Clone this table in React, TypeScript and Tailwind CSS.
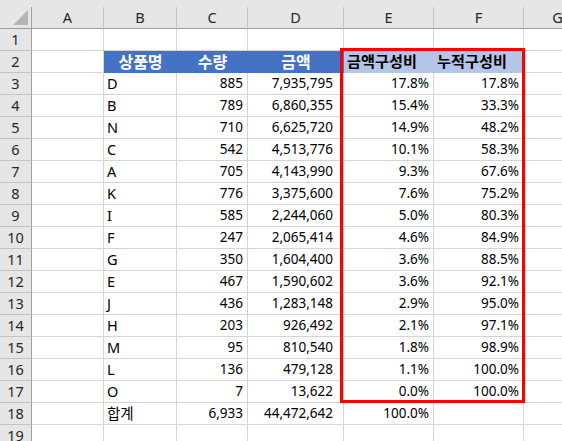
import React from "react";

type Row = [string, string, string, string, string];

const data: Row[] = [
  ["D", "885", "7,935,795", "17.8%", "17.8%"],
  ["B", "789", "6,860,355", "15.4%", "33.3%"],
  ["N", "710", "6,625,720", "14.9%", "48.2%"],
  ["C", "542", "4,513,776", "10.1%", "58.3%"],
  ["A", "705", "4,143,990", "9.3%", "67.6%"],
  ["K", "776", "3,375,600", "7.6%", "75.2%"],
  ["I", "585", "2,244,060", "5.0%", "80.3%"],
  ["F", "247", "2,065,414", "4.6%", "84.9%"],
  ["G", "350", "1,604,400", "3.6%", "88.5%"],
  ["E", "467", "1,590,602", "3.6%", "92.1%"],
  ["J", "436", "1,283,148", "2.9%", "95.0%"],
  ["H", "203", "926,492", "2.1%", "97.1%"],
  ["M", "95", "810,540", "1.8%", "98.9%"],
  ["L", "136", "479,128", "1.1%", "100.0%"],
  ["O", "7", "13,622", "0.0%", "100.0%"],
];

const cell = "h-[22px] border-r border-b border-[#d4d4d4] flex items-center whitespace-nowrap overflow-hidden";
const L = cell + " justify-start pl-[3px]";
const R = cell + " justify-end pr-[4px]";
const RD = cell + " justify-end pr-[10px]";
const E = cell;

function RowHead({ n }: { n: number }) {
  return (
    <div className="h-[22px] bg-[#e6e6e6] border-r border-r-[#9e9e9e] border-b border-b-[#c4c4c4] flex items-center justify-center text-[#262626] text-[14.5px]">
      {n}
    </div>
  );
}

function ColHead({ c }: { c: string }) {
  return (
    <div className="h-[22px] bg-[#e6e6e6] border-r border-r-[#c4c4c4] border-b border-b-[#9e9e9e] flex items-center justify-center text-[#262626] text-[14.5px]">
      {c}
    </div>
  );
}

const blue = "h-[22px] bg-[#4472c4] flex items-center justify-center text-white font-bold text-[16px] whitespace-nowrap";
const light = "h-[22px] bg-[#b4c6e7] flex items-center justify-start pl-[3px] font-bold text-[15.2px] whitespace-nowrap overflow-hidden";

export default function App() {
  return (
    <div
      className="relative w-[562px] h-[441px] overflow-hidden bg-white text-black text-[13.5px] leading-none"
      style={{ fontFamily: '"Noto Sans", "Noto Sans CJK KR", sans-serif' }}
    >
      <div className="h-[7px] bg-[#e6e6e6]" />
      <div className="grid grid-cols-[32px_72px_73px_71px_96px_90px_90px_68px]">
        {/* header row */}
        <div className="h-[22px] bg-[#e6e6e6] border-r border-r-[#9e9e9e] border-b border-b-[#9e9e9e] flex items-end justify-end pr-[3px] pb-[3px]">
          <svg width="15" height="15" viewBox="0 0 15 15">
            <polygon points="15,0 15,15 0,15" fill="#b5b5b5" />
          </svg>
        </div>
        {["A", "B", "C", "D", "E", "F", "G"].map((c) => (
          <ColHead key={c} c={c} />
        ))}

        {/* row 1 */}
        <RowHead n={1} />
        {[0, 1, 2, 3, 4, 5, 6].map((i) => (
          <div key={i} className={E} />
        ))}

        {/* row 2 */}
        <RowHead n={2} />
        <div className={E} />
        <div className={blue}>상품명</div>
        <div className={blue}>수량</div>
        <div className={blue}>금액</div>
        <div className={light}>금액구성비</div>
        <div className={light}>누적구성비</div>
        <div className={E} />

        {data.map((r, i) => (
          <React.Fragment key={i}>
            <RowHead n={i + 3} />
            <div className={E} />
            <div className={L + " text-[14.5px]"}>{r[0]}</div>
            <div className={R}>{r[1]}</div>
            <div className={RD}>{r[2]}</div>
            <div className={R}>{r[3]}</div>
            <div className={R}>{r[4]}</div>
            <div className={E} />
          </React.Fragment>
        ))}

        {/* row 18 */}
        <RowHead n={18} />
        <div className={E} />
        <div className={L + " text-[14.5px]"}>합계</div>
        <div className={R}>6,933</div>
        <div className={RD}>44,472,642</div>
        <div className={R}>100.0%</div>
        <div className={E} />
        <div className={E} />

        {/* row 19 */}
        <RowHead n={19} />
        {[0, 1, 2, 3, 4, 5, 6].map((i) => (
          <div key={i} className={E} />
        ))}
      </div>

      <div className="absolute left-[340px] top-[48px] w-[185px] h-[355px] border-[3px] border-[#ff0000] pointer-events-none" />
    </div>
  );
}
